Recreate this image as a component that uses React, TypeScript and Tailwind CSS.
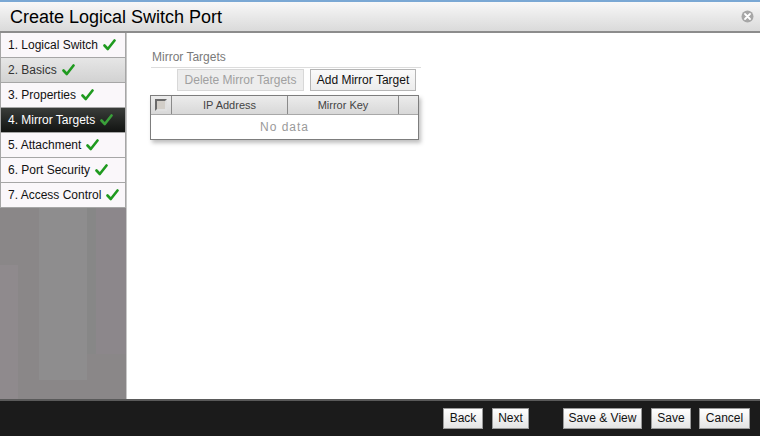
import React from "react";

const Check = ({ dim }: { dim?: boolean }) => (
  <svg width="13" height="12" viewBox="0 0 13 12" className="ml-[5px] inline-block">
    <path d="M1.5 6.5 L4.8 10 L11.5 1.5" fill="none" stroke={dim ? "#3aa03a" : "#1f9a1f"} strokeWidth="2.6" strokeLinecap="round" strokeLinejoin="round" />
  </svg>
);

const steps = [
  "1. Logical Switch",
  "2. Basics",
  "3. Properties",
  "4. Mirror Targets",
  "5. Attachment",
  "6. Port Security",
  "7. Access Control",
];

const FBtn = ({ children, w }: { children: React.ReactNode; w: string }) => (
  <button className={`h-[21px] ${w} border border-[#9a9a9a] bg-gradient-to-b from-[#ffffff] to-[#e4e4e4] text-[12px] text-[#111] flex items-center justify-center`}>
    {children}
  </button>
);

export default function App() {
  return (
    <div className="w-[760px] h-[436px] flex flex-col bg-white overflow-hidden" style={{ fontFamily: '"Liberation Sans", Arial, sans-serif' }}>
      {/* title */}
      <div className="h-[33px] shrink-0 border-t-[2px] border-t-[#7aa8d4] border-b-[2px] border-b-[#8c8c8c] bg-gradient-to-b from-[#f8f8f8] to-[#dadada] flex items-center justify-between pl-[10px] pr-[6px]">
        <span className="text-[18px] text-black leading-none pt-[1px]">Create Logical Switch Port</span>
        <svg width="13" height="13" viewBox="0 0 13 13">
          <circle cx="6.5" cy="6.5" r="6" fill="#a7a7a7" />
          <path d="M4 4 L9 9 M9 4 L4 9" stroke="#fff" strokeWidth="1.8" strokeLinecap="round" />
        </svg>
      </div>
      <div className="flex-1 flex min-h-0">
        {/* sidebar */}
        <div className="w-[127px] shrink-0 relative bg-[#8a8788] border-r border-r-[#c8c8c8] flex flex-col">
          <div className="absolute left-0 top-[232px] w-[18px] h-[134px] bg-[#8f8a8d]" />
          <div className="absolute left-[39px] top-[175px] w-[48px] h-[172px] bg-[#8e8d8e]" />
          <div className="absolute left-[87px] top-[175px] w-[9px] h-[146px] bg-[#878787]" />
          <div className="absolute left-[96px] top-[175px] w-[30px] h-[146px] bg-[#8c878b]" />
          <div className="relative flex flex-col">
            {steps.map((s, i) => {
              const active = i === 3;
              const gray = i === 1;
              return (
                <div
                  key={s}
                  className={`h-[25px] flex items-center pl-[7px] text-[12px] border border-[#a6a6a6] border-t-0 ${
                    active
                      ? "bg-gradient-to-b from-[#3a3d3a] to-[#121412] text-white border-[#2a2a2a]"
                      : gray
                      ? "bg-gradient-to-b from-[#e6e6e6] to-[#d2d2d2] text-[#333]"
                      : "bg-[#faf7fa] text-[#111]"
                  }`}
                >
                  {s}
                  <Check dim={active} />
                </div>
              );
            })}
          </div>
        </div>
        {/* content */}
        <div className="flex-1 pl-[24px] pt-[17px]">
          <div className="w-[270px]">
            <div className="text-[12px] text-[#7a7a7a] pl-[1px] leading-[14px] pb-[3px] border-b border-b-[#dcdcdc]">Mirror Targets</div>
            <div className="flex gap-[6px] pl-[26px] mt-[1px]">
              <div className="h-[22px] w-[127px] border border-[#d8d8d8] bg-[#ededed] text-[12px] text-[#a0a0a0] flex items-center justify-center">Delete Mirror Targets</div>
              <div className="h-[22px] w-[106px] border border-[#b5b5b5] bg-gradient-to-b from-[#fafafa] to-[#ececec] text-[12px] text-[#111] flex items-center justify-center">Add Mirror Target</div>
            </div>
            <div className="mt-[4px] ml-[-1px] w-[269px] border border-[#7d7d7d] shadow-[2px_3px_4px_rgba(0,0,0,0.25)]">
              <div className="h-[19px] flex bg-gradient-to-b from-[#ececec] to-[#d8d8d8] border-b border-b-[#a8a8a8] text-[11px] text-[#444]">
                <div className="w-[21px] border-r border-r-[#8a8a8a] flex items-center justify-center">
                  <div className="w-[12px] h-[12px] border-[2px] border-t-[#6a6a6a] border-l-[#6a6a6a] border-r-[#e0e0e0] border-b-[#e0e0e0] bg-[#d2cec8]" />
                </div>
                <div className="w-[116px] border-r border-r-[#8a8a8a] flex items-center justify-center">IP Address</div>
                <div className="w-[111px] border-r border-r-[#8a8a8a] flex items-center justify-center">Mirror Key</div>
                <div className="flex-1" />
              </div>
              <div className="h-[24px] flex items-center justify-center text-[12px] text-[#9a9a9a] tracking-[1px] bg-white">No data</div>
            </div>
          </div>
        </div>
      </div>
      {/* footer */}
      <div className="h-[37px] shrink-0 bg-[#1b1b1b] border-t-[2px] border-t-[#5a5a5a] flex items-center pl-[443px] pb-[1px]">
        <FBtn w="w-[40px]">Back</FBtn>
        <div className="w-[9px]" />
        <FBtn w="w-[37px]">Next</FBtn>
        <div className="w-[34px]" />
        <FBtn w="w-[79px]">Save &amp; View</FBtn>
        <div className="w-[9px]" />
        <FBtn w="w-[40px]">Save</FBtn>
        <div className="w-[8px]" />
        <FBtn w="w-[51px]">Cancel</FBtn>
      </div>
    </div>
  );
}
